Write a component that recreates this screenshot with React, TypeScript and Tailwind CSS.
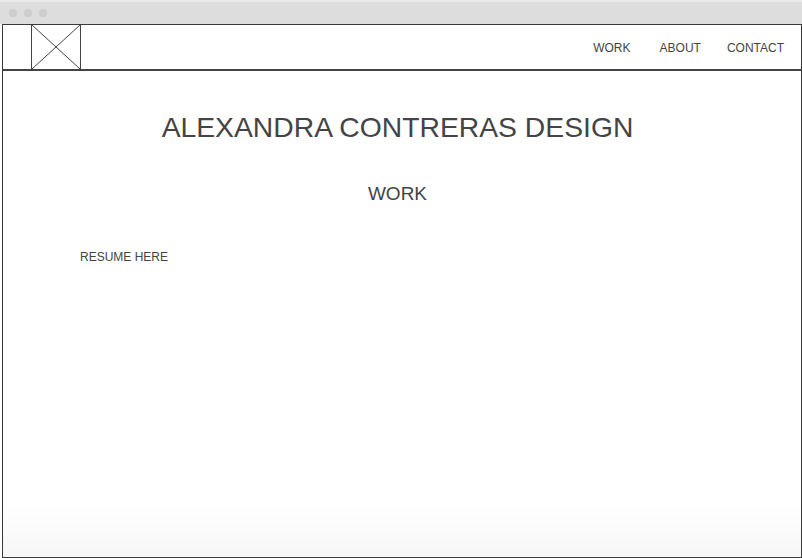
export default function App() {
  return (
    <div className="w-[802px] h-[558px] bg-white flex flex-col overflow-hidden" style={{ fontFamily: '"Liberation Sans", Arial, sans-serif' }}>
      {/* browser chrome */}
      <div className="h-[24px] shrink-0 bg-[#dddddd] border-t-2 border-[#e9e9e9] flex items-center gap-[7px] pl-[9px]">
        <span className="w-[8px] h-[8px] rounded-full bg-[#cdcdcd]" />
        <span className="w-[8px] h-[8px] rounded-full bg-[#cdcdcd]" />
        <span className="w-[8px] h-[8px] rounded-full bg-[#cdcdcd]" />
      </div>

      <div className="ml-[2px] w-[800px] flex-1 border border-[#3a3a3a] flex flex-col bg-gradient-to-b from-white from-90% to-[#f6f6f6]">
        <header className="h-[46px] shrink-0 border-b-2 border-[#444] bg-white flex items-stretch">
          <div className="ml-[28px] w-[50px] border-x border-[#444]">
            <svg width="48" height="44" viewBox="0 0 48 44" className="block">
              <line x1="0" y1="0" x2="48" y2="44" stroke="#444" strokeWidth="1" />
              <line x1="48" y1="0" x2="0" y2="44" stroke="#444" strokeWidth="1" />
            </svg>
          </div>
          <nav className="ml-auto flex items-center pt-[2px] pr-[17px] text-[12px] text-[#444]">
            <span>WORK</span>
            <span className="ml-[29px]">ABOUT</span>
            <span className="ml-[26px]">CONTACT</span>
          </nav>
        </header>

        <main className="flex flex-col pr-[9px] text-[#444]">
          <h1 className="mt-[40px] text-center text-[28.3px] leading-[32px]">ALEXANDRA CONTRERAS DESIGN</h1>
          <h2 className="mt-[40px] text-center text-[19px] leading-[22px]">WORK</h2>
          <p className="mt-[45px] ml-[77px] text-[12px] leading-[14px]">RESUME HERE</p>
        </main>
      </div>
    </div>
  );
}
